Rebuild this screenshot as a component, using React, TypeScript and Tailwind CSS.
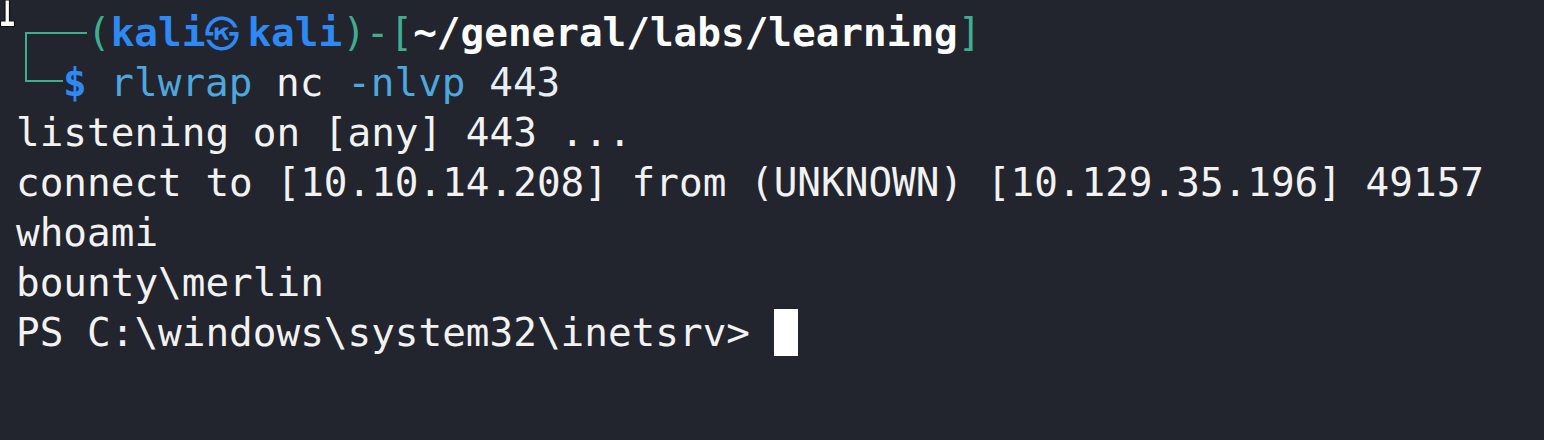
import React from "react";

const GREEN = "text-[#3fae8e]";

export default function App() {
  return (
    <div className="relative w-[1544px] h-[440px] overflow-hidden bg-[#23252e] pl-[16px] pt-[7px] font-['DejaVu_Sans_Mono',monospace] text-[39.35px] leading-[50px] text-[#f2f2f2] whitespace-pre">
      {/* line 1 */}
      <div className="flex h-[50px]">
        <div className="w-[71px] h-[50px] shrink-0">
          <div className="ml-[9px] mt-[25px] h-[25px] w-[62px] border-l-2 border-t-2 border-[#3fae8e]" />
        </div>
        <span className={GREEN}>(</span>
        <span className="font-bold text-[#2e89f4]">kali</span>
        <span className="flex h-[50px] w-[42px] shrink-0 items-center justify-start overflow-visible font-['Noto_Sans_CJK_KR',sans-serif] text-[35px] leading-none font-bold text-[#2e89f4]">
          <span className="-mt-[2px] -ml-[1px]">㉿</span>
        </span>
        <span className="font-bold text-[#2e89f4]">kali</span>
        <span className={GREEN}>)-[</span>
        <span className="font-bold text-white">~/general/labs/learning</span>
        <span className={GREEN}>]</span>
      </div>
      {/* line 2 */}
      <div className="flex h-[50px]">
        <div className="w-[47px] h-[50px] shrink-0">
          <div className="ml-[9px] h-[25px] w-[38px] border-l-2 border-b-2 border-[#3fae8e]" />
        </div>
        <span className="font-bold text-[#2e89f4]">$ </span>
        <span className="text-[#4ea7dd]">rlwrap</span>
        <span className="text-[#f2f2f2]"> nc </span>
        <span className="text-[#4ea7dd]">-nlvp</span>
        <span className="text-[#e8eef5]"> 443</span>
      </div>
      <div className="h-[50px]">listening on [any] 443 ...</div>
      <div className="h-[50px]">connect to [10.10.14.208] from (UNKNOWN) [10.129.35.196] 49157</div>
      <div className="h-[50px]">whoami</div>
      <div className="h-[50px]">bounty\merlin</div>
      <div className="flex h-[50px] items-start">
        <span>PS C:\windows\system32\inetsrv&gt; </span>
        <div className="mt-[2px] h-[47px] w-[24px] bg-white" />
      </div>

      {/* mouse I-beam pointer */}
      <svg className="absolute left-0 top-0" width="18" height="30" viewBox="0 0 18 30">
        <path
          d="M5 0 H9.5 V21 H14.5 V26.5 H0.5 V21 H5 Z"
          fill="#ffffff"
          stroke="#111111"
          strokeWidth="1.2"
        />
      </svg>
    </div>
  );
}
